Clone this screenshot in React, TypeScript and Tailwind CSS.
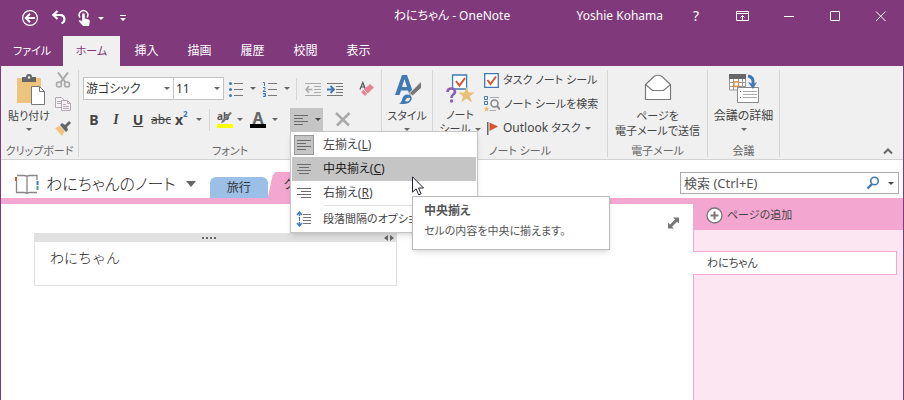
import type { ReactNode } from "react";
import clsx from "clsx";

function Caret({ className }: { className?: string }) {
  return (
    <svg className={clsx("shrink-0", className)} width="6" height="3" viewBox="0 0 6 3" fill="currentColor">
      <path d="M0 0h6L3 3z" />
    </svg>
  );
}

function Divider() {
  return <span className="w-px h-[22px] shrink-0 bg-[#d5d5d5]" />;
}

function Lines({ rows }: { rows: number[][] }) {
  return (
    <svg width="16" height="16" viewBox="0 0 16 16" stroke="#6a6a6a" shapeRendering="crispEdges">
      {rows.map(([x1, x2], i) => (
        <path key={i} d={`M${x1} ${3.5 + i * 3}H${x2}`} />
      ))}
    </svg>
  );
}

const leftRows = [[1, 15], [1, 10], [1, 15], [1, 10]];
const centerRows = [[1, 15], [3, 13], [1, 15], [3, 13]];
const rightRows = [[1, 15], [5, 15], [1, 15], [5, 15]];

function TitleBar() {
  return (
    <header className="flex items-center h-9 pb-1 text-[12px] leading-4 text-white">
      <div className="flex flex-1 items-center pt-1">
        <button aria-label="戻る" className="ml-5">
          <svg width="18" height="18" viewBox="0 0 18 18" fill="none" stroke="currentColor">
            <circle cx="9" cy="9" r="7.4" strokeWidth="1.2" />
            <path d="M14 9H5M9 4.8L4.8 9L9 13.2" strokeWidth="2" />
          </svg>
        </button>
        <button aria-label="元に戻す" className="ml-3">
          <svg width="16" height="16" viewBox="0 0 16 16" fill="none" stroke="currentColor" strokeWidth="2.2">
            <path d="M2 5h7a4.200 4.200 0 0 1 1.500 8.200" />
            <path d="M6.500 1L2.300 5L6.500 9" />
          </svg>
        </button>
        <button aria-label="タッチ/マウス モードの切り替え" className="flex items-center ml-2.5">
          <svg width="15" height="18" viewBox="0 0 15 18" fill="currentColor">
            <path d="M3 8.500a4.300 4.300 0 1 1 7 0" fill="none" stroke="currentColor" strokeWidth="1.500" />
            <path d="M5.200 5.500a1.300 1.300 0 0 1 2.600 0v4l4 1q1.200.4 1 2L12 17H6L1.500 11.800q1.500-1.400 3.700.7z" />
          </svg>
          <Caret className="ml-1.5" />
        </button>
        <button aria-label="クイック アクセス ツール バーのユーザー設定" className="ml-4">
          <svg width="6" height="7" viewBox="0 0 6 7" fill="currentColor">
            <path d="M0 0h6v1H0zM0 3h6L3 6z" />
          </svg>
        </button>
      </div>
      <h1>わにちゃん - OneNote</h1>
      <div className="flex flex-1 items-center justify-end">
        <span className="mr-2.5 whitespace-nowrap">Yoshie Kohama</span>
        <button className="w-[46px] text-[14px]">?</button>
        <WindowButton label="リボンの表示オプション">
          <path d="M1.500 2.500h12v9h-12zM1.500 4.500h12M7.500 11V6M5.500 8.500L7.500 6.500L9.500 8.500" />
        </WindowButton>
        <WindowButton label="最小化">
          <path d="M3 7.500h10" />
        </WindowButton>
        <WindowButton label="最大化">
          <path d="M3.500 2.500h9v9h-9z" />
        </WindowButton>
        <WindowButton label="閉じる">
          <path d="M3 2.500L12.500 12M12.500 2.500L3 12" />
        </WindowButton>
      </div>
    </header>
  );
}

function WindowButton({ label, children }: { label: string; children: ReactNode }) {
  return (
    <button aria-label={label} className="flex w-[46px] shrink-0 justify-center">
      <svg width="15" height="15" viewBox="0 0 15 15" fill="none" stroke="currentColor">
        {children}
      </svg>
    </button>
  );
}

function RibbonTabs() {
  return (
    <nav className="flex h-[30px] text-[12px] leading-4 text-white">
      <button className="w-[62px] text-[11px]">ファイル</button>
      <button className="w-[57px] bg-[#f0f0f0] text-[11px] text-[#80397b]">ホーム</button>
      {["挿入", "描画", "履歴", "校閲", "表示"].map((tab) => (
        <button key={tab} className="w-[53px]">
          {tab}
        </button>
      ))}
    </nav>
  );
}

function Group({ label, className, children }: { label: string; className: string; children: ReactNode }) {
  return (
    <section className={clsx("flex h-[87px] shrink-0 flex-col justify-between border-r border-[#d5d5d5]", className)}>
      {children}
      <h2 className="whitespace-nowrap text-center text-[11px] leading-3 text-[#666]">{label}</h2>
    </section>
  );
}

function ClipboardGroup() {
  return (
    <Group label="クリップボード" className="w-[78px]">
      <div className="flex pl-1">
        <button className="flex w-12 flex-col items-center pt-1">
          <svg width="32" height="32" viewBox="0 0 32 32">
            <path d="M4 4h24v25H4z" fill="#edc47d" />
            <path d="M9 3h4a3 3 0 0 1 6 0h4v5H9z" fill="#666" />
            <circle cx="16" cy="3.500" r="1.200" fill="#f0f0f0" />
            <path d="M18.500 12.500h8l5 5v13h-13z" fill="#fff" stroke="#777" />
            <path d="M26.500 12.500v5h5" fill="none" stroke="#777" />
          </svg>
          <span className="mt-0.5 leading-4">貼り付け</span>
          <Caret className="mt-1 text-[#666]" />
        </button>
        <div className="flex flex-col gap-2 pl-0.5 pt-0.5">
          <button aria-label="切り取り">
            <svg width="16" height="16" viewBox="0 0 16 16" fill="none" stroke="#a9a9a9" strokeWidth="1.600">
              <path d="M3 0.500l7.500 10M13 0.500l-7.500 10" strokeWidth="2" />
              <circle cx="4" cy="12.500" r="2.500" />
              <circle cx="12" cy="12.500" r="2.500" />
            </svg>
          </button>
          <button aria-label="コピー">
            <svg width="16" height="16" viewBox="0 0 16 16" fill="#f5f1f5" stroke="#b3a9b3">
              <path d="M.5 1.500h6l2 2v8h-8zM2 5.500h5M2 7.500h5" />
              <path d="M6.500 4.500h6l3 3v7h-9zM12.500 4.500v3h3M8 8.500h3M8 10.500h6M8 12.500h6" />
            </svg>
          </button>
          <button aria-label="書式のコピー/貼り付け">
            <svg width="16" height="16" viewBox="0 0 16 16">
              <path d="M0 8l5-2 5 5-3 5z" fill="#edc47d" />
              <path d="M5 5l2-2 3 2 4-4 2 2-4 4 1 3-2 2z" fill="#666" />
            </svg>
          </button>
        </div>
      </div>
    </Group>
  );
}

function ComboBox({ label, value, className }: { label: string; value: string; className: string }) {
  return (
    <label className={clsx("relative block", className)}>
      <select
        aria-label={label}
        className="h-[23px] w-full appearance-none border border-[#c3c3c3] bg-white pl-0.5 text-[12px] leading-5 text-[#333]"
      >
        <option>{value}</option>
      </select>
      <Caret className="pointer-events-none absolute right-1 top-[10px] text-[#666]" />
    </label>
  );
}

function FontGroup() {
  return (
    <Group label="フォント" className="w-[303px]">
      <div className="flex flex-col gap-2 pl-1 pt-[7px] text-[#666]">
        <div className="flex h-[23px] items-center">
          <ComboBox label="フォント" value="游ゴシック" className="w-[91px]" />
          <ComboBox label="フォント サイズ" value="11" className="-ml-px w-[51px]" />
          <button aria-label="箇条書き" className="ml-1 flex w-[34px] items-center gap-1.5">
            <svg width="16" height="16" viewBox="0 0 16 16">
              <path d="M6 2.500h9M6 8.500h9M6 14.500h9" stroke="#777" />
              <g fill="#4079b4">
                <circle cx="2.500" cy="2.500" r="1.500" />
                <circle cx="2.500" cy="8.500" r="1.500" />
                <circle cx="2.500" cy="14.500" r="1.500" />
              </g>
            </svg>
            <Caret />
          </button>
          <button aria-label="段落番号" className="flex w-[34px] items-center gap-1.5">
            <svg width="16" height="16" viewBox="0 0 16 16" fill="none">
              <path d="M6 2.500h9M6 8.500h9M6 14.500h9" stroke="#777" />
              <path d="M1 1.500h1.500V5M1 6.500h2v1.700L1 10.500h3M1 12.500h2.500v3H1M1.500 14h2" stroke="#4079b4" />
            </svg>
            <Caret />
          </button>
          <Divider />
          <button aria-label="インデントを減らす" className="ml-2">
            <svg width="16" height="14" viewBox="0 0 16 14" fill="none" stroke="#aaa">
              <path d="M0 1.500h16M9 4.500h7M9 7.500h7M9 10.500h7M0 13.500h16" />
              <path d="M7.500 7.500H1M4 4L1 7.500L4 11" strokeWidth="1.600" />
            </svg>
          </button>
          <button aria-label="インデントを増やす" className="ml-1.5">
            <svg width="16" height="14" viewBox="0 0 16 14" fill="none" stroke="#777">
              <path d="M0 1.500h16M9 4.500h7M9 7.500h7M9 10.500h7M0 13.500h16" />
              <path d="M0 7.500h6.500M3.500 4L7 7.500L3.500 11" stroke="#4079b4" strokeWidth="1.800" />
            </svg>
          </button>
          <span className="ml-1.5">
            <Divider />
          </span>
          <button aria-label="すべての書式をクリア" className="ml-2.5">
            <svg width="16" height="18" viewBox="0 0 16 18">
              <path d="M1 9.500L3.800 2.500L6.500 9.500M2 7h3.500" fill="none" stroke="#555" strokeWidth="1.200" />
              <path d="M2 12L11 4l4 3.500L6 16z" fill="#e98495" />
              <path d="M4.500 9.500l4 4" stroke="#f0f0f0" />
            </svg>
          </button>
        </div>

        <div className="flex h-[23px] items-center text-[14px] leading-5 text-[#444]">
          <button className="w-[22px] font-bold">B</button>
          <button className="w-[22px] font-['Liberation_Serif',serif] font-bold italic">I</button>
          <button className="w-[22px] font-bold underline">U</button>
          <button className="w-6 text-[12px] line-through">abc</button>
          <button aria-label="上付き" className="flex w-9 items-center pl-0.5 font-bold">
            x<sup className="mb-1 text-[8px] leading-none text-[#4079b4]">2</sup>
            <Caret className="ml-2 text-[#666]" />
          </button>
          <Divider />
          <button aria-label="蛍光ペンの色" className="ml-[7px] flex items-center">
            <span className="flex w-4 flex-col border-b-4 border-[#ff0]">
              <svg width="16" height="12" viewBox="0 0 16 12" className="overflow-visible">
                <text x="0" y="8" fontSize="10" fontWeight="bold" fill="#555">ab</text>
                <path d="M15 1L7 10l-3 1.500l1-3L13 0z" fill="#777" />
              </svg>
            </span>
            <Caret className="ml-1 text-[#666]" />
          </button>
          <button aria-label="フォントの色" className="ml-[7px] flex items-center">
            <span className="w-4 border-b-4 border-black text-[16px] font-bold leading-3 text-[#666]">A</span>
            <Caret className="ml-1.5 text-[#666]" />
          </button>
          <span className="ml-2">
            <Divider />
          </span>
          <AlignMenu />
          <span className="ml-1">
            <Divider />
          </span>
          <button aria-label="削除" className="ml-2">
            <svg width="16" height="15" viewBox="0 0 16 15" stroke="#aaa" strokeWidth="2.500">
              <path d="M1 1l13 12.500M14.500 1L2 13.500" />
            </svg>
          </button>
        </div>
      </div>
    </Group>
  );
}

function AlignMenu() {
  const item = "flex h-6 w-full items-center gap-2 pl-0.5 text-left";
  const iconBox = "flex size-5 items-center justify-center";
  return (
    <div className="relative z-10 ml-1">
      <button aria-label="段落の配置" className="flex h-[23px] w-[33px] items-center gap-1.5 bg-[#c5c5c5] pl-[3px]">
        <Lines rows={leftRows} />
        <Caret />
      </button>
      <div className="absolute left-0 top-full w-[188px] border border-[#c5c5c5] bg-white p-px text-[12px] leading-4 text-[#444] shadow-md">
        <button className={item}>
          <span className={clsx(iconBox, "border border-[#999] bg-[#c5c5c5]")}>
            <Lines rows={leftRows} />
          </span>
          <span className="pl-px">左揃え(<u>L</u>)</span>
        </button>
        <button className={clsx(item, "bg-[#c5c5c5] text-[#222]")}>
          <span className={iconBox}>
            <Lines rows={centerRows} />
          </span>
          <span className="pl-px">中央揃え(<u>C</u>)</span>
        </button>
        <button className={item}>
          <span className={iconBox}>
            <Lines rows={rightRows} />
          </span>
          <span className="pl-px">右揃え(<u>R</u>)</span>
        </button>
        <hr className="ml-8 border-[#e1e1e1]" />
        <button className={clsx(item, "mt-px whitespace-nowrap")}>
          <span className={clsx(iconBox, "shrink-0")}>
            <svg width="16" height="16" viewBox="0 0 16 16" fill="none">
              <path d="M7 3.500h8M7 6.500h8M7 9.500h8M7 12.500h8" stroke="#777" />
              <path d="M3.500 1v4M3.500 11v4M1 4l2.500-3L6 4M1 12l2.500 3L6 12" stroke="#4079b4" strokeWidth="1.400" />
              <path d="M3.500 6v4" stroke="#4079b4" />
            </svg>
          </span>
          <span className="pl-px text-[11px]">段落間隔のオプショ</span>
        </button>
        <div
          role="tooltip"
          className="absolute left-[121px] top-16 w-[198px] border border-[#bbb] bg-white px-[11px] pb-2.5 pt-1.5 text-[#555] shadow-md"
        >
          <p className="font-bold leading-4">中央揃え</p>
          <p className="mt-1 whitespace-nowrap text-[11px] leading-4">セルの内容を中央に揃えます。</p>
        </div>
        <svg className="absolute left-[121px] top-11" width="13" height="20" viewBox="0 0 13 20">
          <path d="M.5.800v15.400l3.600-3.400 2.600 6 2.400-1-2.600-5.800h5z" fill="#fff" stroke="#223" />
        </svg>
      </div>
    </div>
  );
}

function StylesGroup() {
  return (
    <section className="flex h-[87px] w-[51px] shrink-0 justify-center border-r border-[#d5d5d5]">
      <button className="flex flex-col items-center pt-1">
        <svg width="32" height="32" viewBox="0 0 32 32">
          <path d="M4 21L11 1h5l7 20h-4.500l-1.500-4.500H10L8.500 21zM11 13h5L13.500 5z" fill="#4079b4" />
          <path d="M30.500 7v7l-9 8-3-3z" fill="#777" stroke="#f0f0f0" />
          <path d="M8 29.500c4 0 2-9 8-9 4 0 6 3 4 6-2 4-8 4-12 3z" fill="#4079b4" />
          <path d="M14 27c1-3 3-4 5-3 0 3-2 4-5 3z" fill="#f0f0f0" />
        </svg>
        <span className="mt-0.5 leading-4">スタイル</span>
        <Caret className="mt-1 text-[#666]" />
      </button>
    </section>
  );
}

function CheckIcon({ size }: { size: number }) {
  return (
    <svg width={size} height={size} viewBox="0 0 15 15">
      <path d="M.700.700h13.600v13.600H.700z" fill="#fff" stroke="#4079b4" strokeWidth="1.300" />
      <path d="M3.500 7l3 4 5.500-7.500" fill="none" stroke="#d65532" strokeWidth="2" />
    </svg>
  );
}

function TagsGroup() {
  return (
    <Group label="ノート シール" className="w-[175px]">
      <div className="flex">
        <button className="flex w-[50px] flex-col items-center pl-1 pt-1">
          <svg width="30" height="30" viewBox="0 0 30 30">
            <path d="M7.600 1h14v14h-14z" fill="#fff" stroke="#4079b4" strokeWidth="1.300" />
            <path d="M11 7l3.500 4.500L20 4" fill="none" stroke="#d65532" strokeWidth="2" />
            <path d="M2.500 18q0-3.500 3.700-3.500c4 0 5 4 2 6-1.500 1-1.700 2-1.700 3.500" fill="none" stroke="#8f5fb0" strokeWidth="2.600" />
            <circle cx="6.500" cy="27" r="1.700" fill="#8f5fb0" />
            <path d="M21.500 13l2.200 5.600h6l-4.800 3.600 2 6.200-5.400-3.800-5.400 3.800 2-6.200-4.800-3.600h6z" fill="#e9bf78" />
          </svg>
          <span className="mt-1 leading-[14px]">ノート</span>
          <span className="flex items-center whitespace-nowrap leading-[14px]">
            シール
            <Caret className="ml-1 text-[#666]" />
          </span>
        </button>
        <div className="flex flex-col gap-2 pl-px pt-0.5">
          <button className="flex items-center gap-1 whitespace-nowrap leading-4">
            <CheckIcon size={15} />
            タスク ノート シール
          </button>
          <button className="flex items-center gap-1 whitespace-nowrap leading-4">
            <svg width="16" height="16" viewBox="0 0 16 16" fill="none">
              <path d="M.5.500h3v3h-3zM.5 5.500h3v3h-3z" stroke="#4079b4" />
              <path d="M2.500 10l.9 2H5.500l-1.600 1.400.6 2.400-2-1.300-2 1.300.6-2.400L0 12h1.600z" fill="#e9bf78" />
              <path d="M6 1.500h9M6 14.500h6" stroke="#aaa" />
              <circle cx="10.500" cy="7.500" r="3.500" stroke="#888" strokeWidth="1.500" />
              <path d="M13 10l3 3.500" stroke="#888" strokeWidth="2" />
            </svg>
            ノート シールを検索
          </button>
          <button className="flex items-center gap-1 whitespace-nowrap leading-4">
            <svg width="15" height="15" viewBox="0 0 15 15">
              <path d="M3 1h1.500v13H3z" fill="#666" />
              <path d="M5.500 1.500L14 5.500L5.500 10z" fill="#d65532" />
            </svg>
            <span className="text-[12px]">Outlook <span className="text-[11px]">タスク</span></span>
            <Caret className="text-[#666]" />
          </button>
        </div>
      </div>
    </Group>
  );
}

function EmailGroup() {
  return (
    <Group label="電子メール" className="w-[100px]">
      <button className="flex flex-col items-center pt-1">
        <svg width="28" height="28" viewBox="0 0 28 28" fill="#fff" stroke="#7a7a7a" strokeWidth="1.200">
          <path d="M1.500 10.500L10 2.500q4-2.500 8 0l8.500 8v15h-25z" />
          <path d="M1.500 10.500l7 6h11l7-6" fill="none" />
        </svg>
        <span className="mt-1.5 leading-[15px]">ページを</span>
        <span className="leading-[15px]">電子メールで送信</span>
      </button>
    </Group>
  );
}

function MeetingGroup() {
  return (
    <Group label="会議" className="w-[72px]">
      <button className="flex flex-col items-center pt-1">
        <svg width="32" height="30" viewBox="0 0 32 30" fill="none">
          <path d="M1.500 4v12h16V4M1.500 8.500h16M1.500 12.500h16M5.500 4v12M10.500 4v12M14.500 4v12" stroke="#999" fill="#fff" />
          <path d="M1 0h17v5H1z" fill="#666" />
          <path d="M6 8h4.500v4.500H6z" fill="#fff" stroke="#e58b3c" strokeWidth="1.300" />
          <path d="M9.500 13.500h21v15h-21z" fill="#fff" stroke="#888" />
          <path d="M15 17.500h14M15 20.500h14M15 23.500h14" stroke="#aaa" />
          <path d="M12 17.500h1M12 23.500h1" stroke="#555" />
          <path d="M20 2q6 1 5 8" stroke="#4079b4" strokeWidth="3" />
          <path d="M20 8l5 7 4-7-4 2z" fill="#4079b4" />
        </svg>
        <span className="mt-1 text-[12px] leading-4">会議の詳細</span>
        <Caret className="mt-1 text-[#666]" />
      </button>
    </Group>
  );
}

function Ribbon() {
  return (
    <div className="flex border-b border-[#d2d2d2] bg-[#f0f0f0] pb-0.5 pt-1 text-[11px] text-[#444]">
      <ClipboardGroup />
      <FontGroup />
      <StylesGroup />
      <TagsGroup />
      <EmailGroup />
      <MeetingGroup />
      <button aria-label="リボンを折りたたむ" className="ml-auto mr-2.5 self-end pb-0.5">
        <svg width="10" height="8" viewBox="0 0 10 8" fill="none" stroke="#666" strokeWidth="2">
          <path d="M1 6.500l4-4 4 4" />
        </svg>
      </button>
    </div>
  );
}

function NotebookBar() {
  return (
    <div className="flex h-[38px] items-end">
      <button className="mb-1 flex h-5 items-center pl-3.5 text-[16px] leading-5 font-light text-[#222]">
        <svg width="24" height="20" viewBox="0 0 24 20" fill="none">
          <path d="M2 1.500h6.500q3 0 3.500 1 .5-1 3.500-1h6.500V6M1.500 7v11.500h7q3 0 3.500 1 .5-1 3.500-1h6.500M12 2v17" stroke="#888" strokeWidth="1.300" />
          <path d="M1 3v4" stroke="#d65532" strokeWidth="2" />
          <path d="M22.500 7v4" stroke="#4079b4" strokeWidth="2" />
          <path d="M22.500 12v4" stroke="#4f9f7f" strokeWidth="2" />
        </svg>
        <span className="ml-[7px]">わにちゃんのノート</span>
        <svg className="ml-2.5" width="10" height="6" viewBox="0 0 10 6" fill="#666">
          <path d="M0 0h10L5 6z" />
        </svg>
      </button>
      <button className="ml-3.5 h-[21px] w-[58px] rounded-t-md bg-[#9bbfe6] text-[12px] leading-4 text-[#333]">旅行</button>
      <button className="h-[26px] w-24 bg-[#f3a7d0] pl-4 text-left text-[12px] leading-4 text-[#333] [clip-path:polygon(0_100%,5px_3px,8px_0,100%_0,100%_100%)]">
        ク
      </button>
      <div className="mb-1 ml-auto mr-1 flex h-[22px] w-[219px] items-center border border-[#ababab] bg-white px-[3px]">
        <input
          aria-label="検索"
          placeholder="検索 (Ctrl+E)"
          className="min-w-0 flex-1 text-[13px] leading-4 outline-none placeholder:text-[#555]"
        />
        <svg width="14" height="14" viewBox="0 0 14 14" fill="none" stroke="#4079b4">
          <circle cx="8.500" cy="5" r="3.800" strokeWidth="1.600" />
          <path d="M6 8L1.500 12.500" strokeWidth="2.400" />
        </svg>
        <Caret className="ml-2 mr-px text-[#444]" />
      </div>
    </div>
  );
}

function NoteCanvas() {
  return (
    <main className="flex flex-1 items-start justify-between bg-white">
      <article className="ml-[33px] mt-[29px] w-[363px] border border-[#e1e1e1]">
        <div className="flex h-2 items-center justify-end bg-[#e1e1e1] pr-0.5">
          <svg className="mx-auto" width="15" height="2" viewBox="0 0 15 2" fill="#666">
            <path d="M0 0h2v2H0zM4 0h2v2H4zM8 0h2v2H8zM12 0h2v2h-2z" />
          </svg>
          <svg width="10" height="6" viewBox="0 0 10 6" fill="#666">
            <path d="M4 0v6L0 3zM6 0v6l4-3z" />
          </svg>
        </div>
        <p className="px-[15px] pb-[17px] pt-1.5 text-[14px] leading-5 font-light text-[#222] [font-feature-settings:normal]">
          わにちゃん
        </p>
      </article>
      <button aria-label="全画面表示" className="mr-3.5 mt-[13px]">
        <svg width="11" height="12" viewBox="0 0 11 12" fill="#777">
          <path d="M5 .5h6V6.500L9 4.700 4 9.700 6 11.500H0V5.500l2 1.900 5-5z" />
        </svg>
      </button>
    </main>
  );
}

function PageList() {
  return (
    <aside className="-mt-1.5 w-[210px] border-l border-[#f3a7d0] bg-[#fce6f2] text-[11px] leading-4 text-[#444]">
      <button className="flex h-8 w-full items-center gap-1 bg-[#f3a7d0] pl-3 pt-0.5">
        <svg width="17" height="17" viewBox="0 0 17 17" fill="#fff" stroke="#777">
          <circle cx="8.500" cy="8.500" r="7.500" strokeWidth="1.300" />
          <path d="M4.500 8.500h8M8.500 4.500v8" strokeWidth="2" />
        </svg>
        ページの追加
      </button>
      <a href="#page" className="-ml-px mr-1.5 mt-[21px] block border border-l-0 border-[#f3a7d0] bg-white py-[3px] pl-3.5">
        わにちゃん
      </a>
    </aside>
  );
}

export default function App() {
  return (
    <div className="flex min-h-screen flex-col border-x border-[#80397b] bg-white font-['Noto_Sans','Noto_Sans_CJK_JP',sans-serif] [font-feature-settings:'palt']">
      <div className="bg-[#80397b]">
        <TitleBar />
        <RibbonTabs />
      </div>
      <Ribbon />
      <NotebookBar />
      <div className="h-1.5 bg-[#f3a7d0]" />
      <div className="flex flex-1">
        <NoteCanvas />
        <PageList />
      </div>
    </div>
  );
}
